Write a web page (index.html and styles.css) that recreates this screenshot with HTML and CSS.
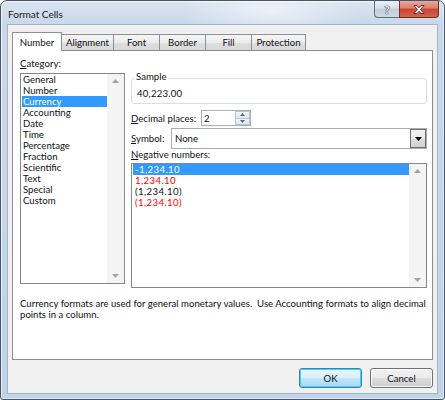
FILE: index.html
```html
<!DOCTYPE html>
<html>
<head>
<meta charset="utf-8">
<link rel="stylesheet" href="styles.css">
</head>
<body>
<div class="window">
  <div class="titlebar">
    <span class="title">Format Cells</span>
    <div class="caption-btns">
      <div class="cbtn help">?</div>
      <div class="cbtn close">
        <svg width="14" height="11" viewBox="0 0 14 11"><path d="M2 1.5h3l2 2.3 2-2.3h3l-3.5 4 3.5 4h-3l-2-2.3-2 2.3h-3l3.5-4z" fill="#fff" stroke="#5a1f17" stroke-width="0.9" stroke-linejoin="round"/></svg>
      </div>
    </div>
  </div>
  <div class="client">
    <div class="tabs">
      <div class="tab active w-number">Number</div>
      <div class="tab w-align">Alignment</div>
      <div class="tab w-font">Font</div>
      <div class="tab w-border">Border</div>
      <div class="tab w-fill">Fill</div>
      <div class="tab w-prot">Protection</div>
    </div>
    <div class="panel">
      <div class="cols">
        <div class="left">
          <div class="label"><u>C</u>ategory:</div>
          <div class="listbox cat">
            <div class="items">
              <div class="item">General</div>
              <div class="item">Number</div>
              <div class="item sel">Currency</div>
              <div class="item">Accounting</div>
              <div class="item">Date</div>
              <div class="item">Time</div>
              <div class="item">Percentage</div>
              <div class="item">Fraction</div>
              <div class="item">Scientific</div>
              <div class="item">Text</div>
              <div class="item">Special</div>
              <div class="item">Custom</div>
            </div>
            <div class="vscroll">
              <svg class="arr" width="7" height="4" viewBox="0 0 7 4"><path d="M0 4L3.5 0 7 4z" fill="#a3a3a3"/></svg>
              <svg class="arr" width="7" height="4" viewBox="0 0 7 4"><path d="M0 0L3.5 4 7 0z" fill="#a3a3a3"/></svg>
            </div>
          </div>
        </div>
        <div class="right">
          <div class="group">
            <div class="legend">Sample</div>
            <div class="sample">40,223.00</div>
          </div>
          <div class="row dec">
            <span class="rlabel dec-label"><u>D</u>ecimal places:</span>
            <div class="spin">
              <span class="spin-val">2</span>
              <div class="spin-btns">
                <div class="sbtn"><svg width="5" height="3" viewBox="0 0 5 3"><path d="M0 3L2.5 0 5 3z" fill="#4a6a8a"/></svg></div>
                <div class="sbtn"><svg width="5" height="3" viewBox="0 0 5 3"><path d="M0 0L2.5 3 5 0z" fill="#4a6a8a"/></svg></div>
              </div>
            </div>
          </div>
          <div class="row sym">
            <span class="rlabel sym-label"><u>S</u>ymbol:</span>
            <div class="combo">
              <span class="combo-val">None</span>
              <div class="combo-btn"><svg width="7" height="4" viewBox="0 0 7 4"><path d="M0 0L3.5 4 7 0z" fill="#000"/></svg></div>
            </div>
          </div>
          <div class="label neg-label"><u>N</u>egative numbers:</div>
          <div class="listbox neg">
            <div class="items">
              <div class="item sel">-1,234.10</div>
              <div class="item red">1,234.10</div>
              <div class="item">(1,234.10)</div>
              <div class="item red">(1,234.10)</div>
            </div>
            <div class="vscroll">
              <svg class="arr" width="7" height="4" viewBox="0 0 7 4"><path d="M0 4L3.5 0 7 4z" fill="#a3a3a3"/></svg>
              <svg class="arr" width="7" height="4" viewBox="0 0 7 4"><path d="M0 0L3.5 4 7 0z" fill="#a3a3a3"/></svg>
            </div>
          </div>
        </div>
      </div>
      <p class="desc">Currency formats are used for general monetary values.&nbsp; Use Accounting formats to align decimal points in a column.</p>
    </div>
    <div class="buttons">
      <div class="btn default">OK</div>
      <div class="btn">Cancel</div>
    </div>
  </div>
</div>
</body>
</html>
```
FILE: styles.css
```css
* { box-sizing: border-box; }
html, body { margin: 0; padding: 0; }
body {
  width: 445px;
  height: 400px;
  overflow: hidden;
  background: #ffffff;
  font-family: "Lato", "Noto Sans", sans-serif;
  font-size: 9.6px;
  line-height: 11px;
  color: #111;
}
u { text-decoration: underline; text-underline-offset: 1px; }

.window {
  width: 445px;
  height: 400px;
  display: flex;
  flex-direction: column;
  padding: 0 6px 5px 6px;
  border: 1px solid #44556b;
  border-radius: 7px 7px 3px 3px;
  background:
    radial-gradient(ellipse 90px 30px at 270px 10px, rgba(255,255,255,0.55), rgba(255,255,255,0)),
    linear-gradient(180deg, #d9e4f0 0px, #c9d9ea 23px, #c0d3e7 100%);
  box-shadow: inset 1px 1px 0 rgba(255,255,255,0.7), inset -1px -1px 0 rgba(255,255,255,0.5);
}

.titlebar {
  height: 23px;
  flex: none;
  display: flex;
  justify-content: space-between;
  align-items: flex-start;
}
.title {
  font-size: 10px;
  line-height: 12px;
  color: #1a1a1a;
  margin-top: 7px;
  margin-left: 1px;
}
.caption-btns {
  display: flex;
  margin-right: -1px;
}
.cbtn {
  height: 17px;
  display: flex;
  align-items: center;
  justify-content: center;
  border: 1px solid #5f6e80;
  border-top: none;
}
.help {
  width: 25px;
  border-radius: 0 0 0 4px;
  border-right: none;
  background: linear-gradient(180deg, #e9eff5 0%, #d6e0ea 45%, #c1cfdd 50%, #cad8e6 100%);
  color: #f4f6f8;
  font-size: 11px;
  font-weight: bold;
  text-shadow: 0 0 1px #3c4856, 0 0 1px #3c4856, 0 0 1px #3c4856;
}
.close {
  width: 40px;
  border-radius: 0 0 4px 0;
  border-color: #7a2b20;
  background: linear-gradient(180deg, #e9a99b 0%, #dc7d6c 45%, #c8432f 50%, #d4624c 100%);
}

.client {
  flex: 1;
  display: flex;
  flex-direction: column;
  background: #f0f0f0;
  border: 1px solid #a3b5c9;
}

.tabs {
  display: flex;
  align-items: flex-end;
  height: 19px;
  margin: 7px 0 -1px 4px;
  position: relative;
  z-index: 1;
}
.tab {
  height: 16px;
  margin-bottom: 1px;
  margin-left: -1px;
  padding-top: 2px;
  text-align: center;
  border: 1px solid #8d9095;
  border-bottom: none;
  background: linear-gradient(180deg, #f6f6f6 0%, #ececec 50%, #dedede 51%, #d8d8d8 100%);
}
.tab.active {
  height: 19px;
  margin-bottom: 0;
  margin-left: 0;
  padding-top: 4px;
  background: #fff;
}
.w-number { width: 50px; }
.w-align { width: 53px; }
.w-font { width: 47px; }
.w-border { width: 47px; }
.w-fill { width: 47px; }
.w-prot { width: 55px; }

.panel {
  height: 310px;
  margin: 0 4px;
  border: 1px solid #898c95;
  background: #fff;
  padding: 7px 5px 0 7px;
  display: flex;
  flex-direction: column;
}
.cols {
  display: flex;
  gap: 6px;
  height: 230px;
}
.left { width: 105px; display: flex; flex-direction: column; }
.right { width: 296px; display: flex; flex-direction: column; }

.label { height: 11px; }

.listbox {
  border: 1px solid #828790;
  display: flex;
  background: #fff;
}
.listbox.cat { height: 211px; margin-top: 4px; }
.listbox.neg { height: 125px; margin-top: 3px; }
.items { flex: 1; }
.item { height: 11px; margin-left: 1px; padding-left: 1px; white-space: nowrap; }
.neg .item { padding-left: 2px; letter-spacing: 0.4px; }
.item.sel { background: #3399ff; color: #fff; }
.item.red { color: #ff0000; }
.vscroll {
  width: 17px;
  background: #f4f4f4;
  display: flex;
  flex-direction: column;
  justify-content: space-between;
  align-items: center;
  padding: 5px 0 5px 0;
}

.group {
  margin-top: 20px;
  height: 26px;
  border: 1px solid #d5dfe5;
  border-radius: 3px;
}
.legend {
  width: fit-content;
  margin: -8px 0 0 3px;
  padding: 0 1px;
  background: #fff;
}
.sample { margin-top: 6px; padding-left: 5px; letter-spacing: 0.2px; }

.row { display: flex; align-items: center; }
.row.dec { margin-top: 6px; height: 16px; }
.row.sym { margin-top: 2px; height: 21px; }
.dec-label { width: 70px; }
.sym-label { width: 40px; }

.spin {
  width: 50px;
  height: 16px;
  border: 1px solid #abadb3;
  display: flex;
  align-items: center;
  justify-content: space-between;
  background: #fff;
}
.spin-val { padding-left: 2px; }
.spin-btns {
  width: 15px;
  height: 14px;
  display: flex;
  flex-direction: column;
}
.sbtn {
  flex: 1;
  display: flex;
  align-items: center;
  justify-content: center;
  border: 1px solid #b8c6d6;
  background: linear-gradient(180deg, #f3f6f9, #dfe6ee);
}
.sbtn + .sbtn { border-top: none; }

.combo {
  width: 256px;
  height: 21px;
  border: 1px solid #a5acb5;
  display: flex;
  align-items: center;
  justify-content: space-between;
  background: #fff;
}
.combo-val { padding-left: 3px; }
.combo-btn {
  width: 16px;
  height: 19px;
  display: flex;
  align-items: center;
  justify-content: center;
  border: 1px solid #707070;
  background: linear-gradient(180deg, #f2f2f2 0%, #ebebeb 50%, #dddddd 51%, #cfcfcf 100%);
}

.neg-label { margin-top: 0; }

.desc {
  margin: 10px 0 0 0;
  width: 410px;
}

.buttons {
  display: flex;
  justify-content: flex-end;
  gap: 8px;
  margin: 8px 4px 0 0;
}
.btn {
  width: 63px;
  height: 20px;
  display: flex;
  align-items: center;
  justify-content: center;
  border: 1px solid #707070;
  border-radius: 3px;
  background: linear-gradient(180deg, #f2f2f2 0%, #ebebeb 50%, #dddddd 51%, #cfcfcf 100%);
  box-shadow: inset 0 0 0 1px rgba(255,255,255,0.8);
}
.btn.default {
  border-color: #3c7fb1;
  background: linear-gradient(180deg, #eaf6fd 0%, #d9f0fc 50%, #bee6fd 51%, #a7d9f5 100%);
  box-shadow: inset 0 0 0 1px #48d0f5;
}
```
